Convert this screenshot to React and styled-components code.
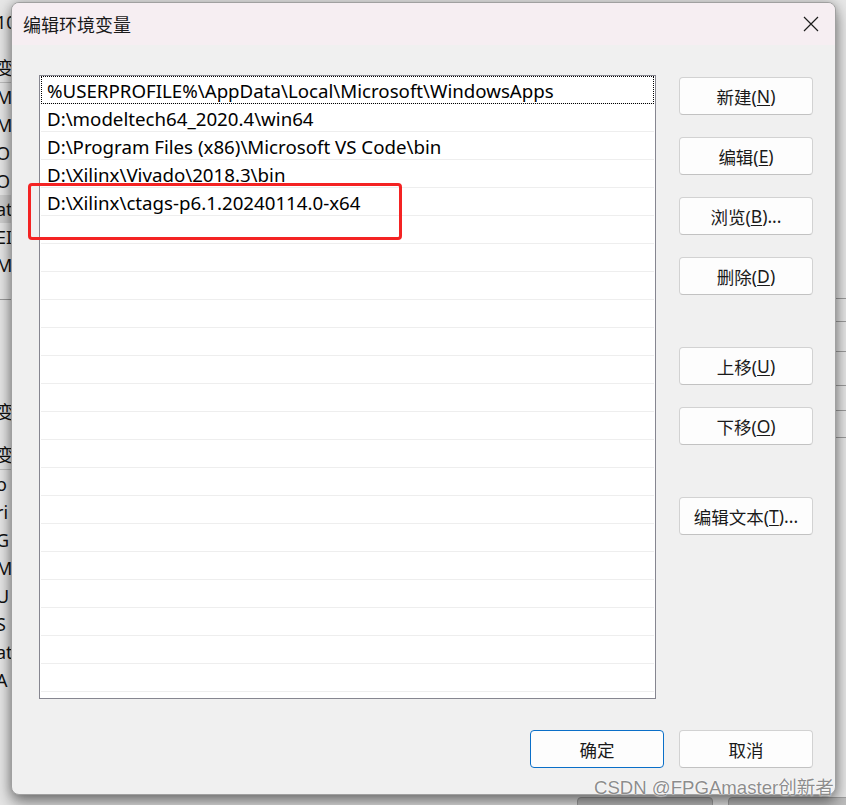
import styled, { createGlobalStyle } from "styled-components";

const paths = [
  "%USERPROFILE%\\AppData\\Local\\Microsoft\\WindowsApps",
  "D:\\modeltech64_2020.4\\win64",
  "D:\\Program Files (x86)\\Microsoft VS Code\\bin",
  "D:\\Xilinx\\Vivado\\2018.3\\bin",
  "D:\\Xilinx\\ctags-p6.1.20240114.0-x64",
];
const ROWS = 22;

const sideButtons = [
  { label: "新建(", key: "N", tail: ")", gap: 0 },
  { label: "编辑(", key: "E", tail: ")", gap: 0 },
  { label: "浏览(", key: "B", tail: ")...", gap: 0 },
  { label: "删除(", key: "D", tail: ")", gap: 0 },
  { label: "上移(", key: "U", tail: ")", gap: 30 },
  { label: "下移(", key: "O", tail: ")", gap: 0 },
  { label: "编辑文本(", key: "T", tail: ")...", gap: 30 },
];

const backTop = ["MC", "MC", "On", "On", "at", "EI", "M"];
const backBottom = ["o", "ri", "G", "M", "U", "S", "at", "A"];

function App() {
  return (
    <>
      <GlobalStyle />
      <Desktop>
        <BackWindow>
          <BackColumn>
            <BackRow $top={8}>10</BackRow>
            <BackRow $top={18} $line>变量</BackRow>
            {backTop.map((t, i) => (
              <BackRow key={i} $active={i === 4}>{t}</BackRow>
            ))}
            <BackRule />
            <BackRow $top={98}>变</BackRow>
            <BackRow $top={15} $line>变量</BackRow>
            {backBottom.map((t, i) => (
              <BackRow key={i}>{t}</BackRow>
            ))}
          </BackColumn>
          <BackRight>
            <RightLine $top={298} />
            <RightLine $top={22} />
            <RightLine $top={29} />
            <RightLine $top={33} />
            <RightLine $top={24} />
            <RightLine $top={26} />
          </BackRight>
          <BackFooter>
            <BackButton />
            <BackButton />
          </BackFooter>
        </BackWindow>

        <Dialog>
          <TitleBar>
            <Title>编辑环境变量</Title>
            <CloseButton>
              <svg width="16" height="16" viewBox="0 0 16 16">
                <path d="M1 1 L15 15 M15 1 L1 15" stroke="#1c1c1c" strokeWidth="1.2" fill="none" />
              </svg>
            </CloseButton>
          </TitleBar>
          <Body>
            <ListBox>
              {Array.from({ length: ROWS }).map((_, i) => (
                <ListRow key={i} $focused={i === 0}>
                  {paths[i] || ""}
                </ListRow>
              ))}
            </ListBox>
            <ButtonColumn>
              {sideButtons.map((b) => (
                <Button key={b.key} $gap={b.gap}>
                  {b.label}
                  <Key>{b.key}</Key>
                  {b.tail}
                </Button>
              ))}
            </ButtonColumn>
          </Body>
          <Footer>
            <Button $primary>确定</Button>
            <Button>取消</Button>
          </Footer>
          <Highlight />
        </Dialog>
        <Watermark>CSDN @FPGAmaster创新者</Watermark>
      </Desktop>
    </>
  );
}

const GlobalStyle = createGlobalStyle`
  html, body {
    margin: 0;
    padding: 0;
  }
  body {
    width: 846px;
    height: 805px;
    overflow: hidden;
    font-family: "Noto Sans", "Noto Sans CJK SC", sans-serif;
  }
`;

const Desktop = styled.div`
  position: relative;
  width: 846px;
  height: 805px;
  overflow: hidden;
  background: #d4d4d4;
`;

const BackWindow = styled.div`
  position: absolute;
  inset: 0;
  background: #e6e6e6;
  display: flex;
  justify-content: space-between;
`;

const BackColumn = styled.div`
  display: flex;
  flex-direction: column;
  width: 60px;
  margin-left: -4px;
`;

const BackRow = styled.div`
  height: 28px;
  line-height: 28px;
  margin-top: ${({ $top }) => ($top ? $top : 0)}px;
  font-size: 18px;
  color: #111;
  white-space: nowrap;
  background: ${({ $active }) => ($active ? "#cfcfcf" : "transparent")};
  border-bottom: ${({ $line }) => ($line ? "1px solid #bcbcbc" : "none")};
`;

const BackRule = styled.div`
  height: 1px;
  margin-top: 20px;
  background: #9a9a9a;
`;

const BackRight = styled.div`
  display: flex;
  flex-direction: column;
  width: 10px;
`;

const RightLine = styled.div`
  height: 1px;
  margin-top: ${({ $top }) => $top}px;
  background: #9c9c9c;
`;

const BackFooter = styled.div`
  position: absolute;
  left: 577px;
  top: 797px;
  display: flex;
  gap: 15px;
`;

const BackButton = styled.div`
  width: 134px;
  height: 30px;
  border: 1px solid #a0a0a0;
  border-radius: 4px;
  background: #bdbdbd;
`;

const Dialog = styled.div`
  position: absolute;
  left: 11px;
  top: 2px;
  width: 825px;
  height: 793px;
  box-sizing: border-box;
  background: #f0f0f0;
  border: 1px solid #a0a0a0;
  border-radius: 8px;
  overflow: hidden;
  box-shadow: 0 8px 16px rgba(0, 0, 0, 0.45), 0 0 10px rgba(0, 0, 0, 0.2);
  display: flex;
  flex-direction: column;
`;

const TitleBar = styled.div`
  height: 42px;
  flex: none;
  display: flex;
  align-items: center;
  justify-content: space-between;
  background: #f6eef2;
  padding-left: 11px;
`;

const Title = styled.div`
  font-size: 18px;
  color: #1a1a1a;
`;

const CloseButton = styled.div`
  width: 48px;
  height: 42px;
  display: flex;
  align-items: center;
  justify-content: center;
`;

const Body = styled.div`
  display: flex;
  gap: 23px;
  padding: 30px 0 0 27px;
`;

const ListBox = styled.div`
  width: 617px;
  height: 624px;
  box-sizing: border-box;
  border: 1px solid #868690;
  background: #fff;
  padding: 0 1px;
  display: flex;
  flex-direction: column;
`;

const ListRow = styled.div`
  height: 28px;
  flex: none;
  box-sizing: border-box;
  border-bottom: 1px solid #eeeeee;
  padding-left: 6px;
  font-size: 18.7px;
  line-height: 29px;
  color: #000;
  white-space: nowrap;
  outline: ${({ $focused }) => ($focused ? "1px dotted #000" : "none")};
  outline-offset: -1px;
`;

const ButtonColumn = styled.div`
  display: flex;
  flex-direction: column;
  gap: 22px;
  padding-top: 2px;
`;

const Button = styled.div`
  width: 134px;
  height: 38px;
  margin-top: ${({ $gap }) => ($gap ? $gap : 0)}px;
  box-sizing: border-box;
  display: flex;
  align-items: center;
  justify-content: center;
  background: #fdfdfd;
  border: 1px solid ${({ $primary }) => ($primary ? "#0a6fc8" : "#d2d2d2")};
  border-bottom-color: ${({ $primary }) => ($primary ? "#0a6fc8" : "#c2c2c2")};
  border-radius: 4px;
  font-size: 17.5px;
  color: #1a1a1a;
  white-space: nowrap;
`;

const Key = styled.span`
  text-decoration: underline;
  text-underline-offset: 2px;
`;

const Footer = styled.div`
  display: flex;
  justify-content: flex-end;
  gap: 15px;
  padding: 31px 22px 0 0;
`;

const Highlight = styled.div`
  position: absolute;
  left: 16px;
  top: 180px;
  width: 374px;
  height: 57px;
  box-sizing: border-box;
  border: 3px solid #f42323;
  border-radius: 4px;
`;

const Watermark = styled.div`
  position: absolute;
  left: 594px;
  top: 772px;
  font-family: "Liberation Sans", "Noto Sans CJK SC", sans-serif;
  font-size: 18.6px;
  color: rgba(120, 120, 120, 0.85);
  text-shadow: 0 0 2px #fff, 0 0 1px #fff;
  white-space: nowrap;
`;

export default App;
